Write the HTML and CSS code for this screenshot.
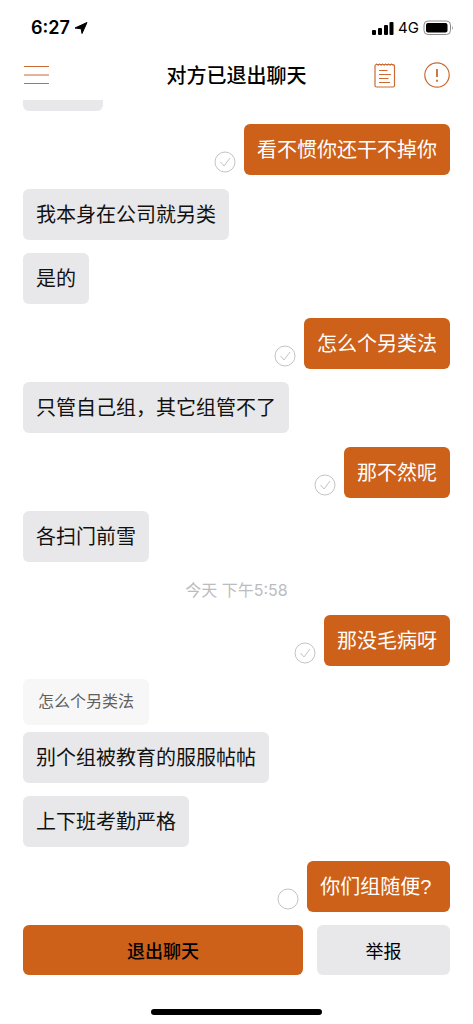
FILE: index.html
```html
<!DOCTYPE html>
<html lang="zh-CN">
<head>
<meta charset="utf-8">
<meta name="viewport" content="width=device-width, initial-scale=1">
<title>对方已退出聊天</title>
<link rel="stylesheet" href="styles.css">
</head>
<body>
<svg class="defs" aria-hidden="true">
  <symbol id="read" viewBox="0 0 22 24">
    <circle cx="11" cy="11" r="10"/><path d="M6.500 11l3.500 4 6-8"/>
  </symbol>
  <symbol id="sent" viewBox="0 0 22 24"><circle cx="11" cy="11" r="10"/></symbol>
</svg>
<div class="app">
  <div class="status-bar">
    <div class="status-group">
      <span class="clock">6:27</span>
      <svg class="location" viewBox="0 0 14 14" aria-hidden="true"><path d="M13 1.500L8 12.500 7.200 7.800 1 7z" fill="#000" stroke="#000" stroke-linejoin="round"/></svg>
    </div>
    <div class="status-group">
      <svg class="signal" viewBox="0 0 22 14" aria-hidden="true"><rect x="0" y="9" width="4" height="5" rx="1"/><rect x="6" y="7" width="4" height="7" rx="1"/><rect x="12" y="4" width="4" height="10" rx="1"/><rect x="17.500" y="1" width="4" height="13" rx="1"/></svg>
      <span class="network">4G</span>
      <svg class="battery" viewBox="0 0 31 16" aria-hidden="true"><rect x="1" y="1" width="26.500" height="13.500" rx="4" fill="none" stroke="#8c8c8c"/><rect x="3" y="3" width="21.500" height="9.500" rx="2"/><path d="M29 5.500q1.500 2 0 4.500z" fill="#8c8c8c"/></svg>
    </div>
  </div>
  <header class="header">
    <button class="icon-button" type="button" aria-label="菜单">
      <svg class="icon" viewBox="0 0 26 26"><path d="M1 4.500h25M1 13h25M1 21.500h25"/></svg>
    </button>
    <h1 class="title">对方已退出聊天</h1>
    <div class="actions">
      <button class="icon-button" type="button" aria-label="记录">
        <svg class="icon" viewBox="0 0 26 26"><rect x="3" y="2.500" width="19.500" height="22.500" rx="1.500"/><path d="M7 8.500H15.500M7 12.500H19M7 16.500H16.500M7 20.500H18"/><path d="M4.500 1.500l2 2.500M7.500 1.500l2 2.500M10.500 1.500l2 2.500M13.500 1.500l2 2.500M16.500 1.500l2 2.500M19.500 1.500l2 2.500" stroke-width="1"/></svg>
      </button>
      <button class="icon-button" type="button" aria-label="提示">
        <svg class="icon" viewBox="0 0 26 26"><circle cx="13" cy="13" r="12.200"/><path d="M13 7v8M13 17.800v2" stroke-width="1.800"/></svg>
      </button>
    </div>
  </header>
  <main class="chat">
    <div class="earlier"></div>
    <div class="row out"><svg class="receipt"><use href="#read"/></svg><p class="bubble">看不惯你还干不掉你</p></div>
    <div class="row"><p class="bubble">我本身在公司就另类</p></div>
    <div class="row"><p class="bubble">是的</p></div>
    <div class="row out"><svg class="receipt"><use href="#read"/></svg><p class="bubble">怎么个另类法</p></div>
    <div class="row"><p class="bubble">只管自己组，其它组管不了</p></div>
    <div class="row out"><svg class="receipt"><use href="#read"/></svg><p class="bubble">那不然呢</p></div>
    <div class="row"><p class="bubble">各扫门前雪</p></div>
    <time class="time">今天 下午5:58</time>
    <div class="row out"><svg class="receipt"><use href="#read"/></svg><p class="bubble">那没毛病呀</p></div>
    <div class="row"><blockquote class="quote">怎么个另类法</blockquote></div>
    <div class="row reply"><p class="bubble">别个组被教育的服服帖帖</p></div>
    <div class="row"><p class="bubble">上下班考勤严格</p></div>
    <div class="row out"><svg class="receipt"><use href="#sent"/></svg><p class="bubble">你们组随便?&nbsp;</p></div>
  </main>
  <footer class="footer">
    <button class="button leave" type="button">退出聊天</button>
    <button class="button report" type="button">举报</button>
  </footer>
  <div class="home-indicator"></div>
</div>
</body>
</html>
```
FILE: styles.css
```css
* { box-sizing: border-box; }

body {
  margin: 0;
  background: #fff;
  color: #111;
  font-family: "Liberation Sans", "Noto Sans CJK SC", sans-serif;
}

.defs { display: none; }

.app {
  display: flex;
  flex-direction: column;
  min-height: 100vh;
  padding-bottom: 9px;
}

.status-bar {
  display: flex;
  align-items: center;
  justify-content: space-between;
  height: 56px;
  padding: 0 19px 0 31px;
  color: #000;
}

.status-group {
  display: flex;
  align-items: center;
  gap: 4px;
}

.clock {
  font: 600 18px/24px Inter, sans-serif;
}

.network {
  font: 400 15px/24px Inter, sans-serif;
}

.location { width: 14px; height: 14px; }
.signal { width: 22px; height: 14px; }
.battery { width: 31px; height: 16px; }

.header {
  display: grid;
  grid-template-columns: 1fr auto 1fr;
  align-items: center;
  height: 44px;
  padding: 0 23px 6px;
}

.icon-button {
  display: block;
  width: 26px;
  height: 26px;
  padding: 0;
  border: 0;
  background: none;
}

.icon {
  display: block;
  width: 26px;
  height: 26px;
  fill: none;
  stroke: #cc6a32;
  stroke-width: 1.2;
}

.title {
  margin: 0;
  padding-top: 2px;
  color: #000;
  font-size: 20px;
  font-weight: 500;
  line-height: 28px;
}

.actions {
  display: flex;
  justify-content: flex-end;
  gap: 26px;
}

.chat {
  display: flex;
  flex-direction: column;
  padding: 0 23px;
}

.earlier {
  width: 80px;
  height: 11px;
  border-radius: 0 0 6px 6px;
  background: #e8e8ea;
}

.row {
  display: flex;
  align-items: flex-end;
  gap: 8px;
  margin-top: 13px;
}

.out {
  justify-content: flex-end;
  margin-top: 14px;
}

.earlier + .out { margin-top: 13px; }
.earlier + .out + .row { margin-top: 14px; }

.reply { margin-top: 7px; }

.bubble {
  margin: 0;
  padding: 12px 13px 11px;
  border-radius: 6px;
  background: #e8e8ea;
  font-size: 20px;
  line-height: 28px;
}

.out .bubble {
  background: #ce6119;
  color: #fff;
}

.quote {
  margin: 0;
  padding: 11px 15px;
  border-radius: 6px;
  background: #f7f7f7;
  color: #606060;
  font-size: 16px;
  line-height: 24px;
}

.receipt {
  flex: none;
  width: 22px;
  height: 24px;
  fill: none;
  stroke: #c4c4c6;
}

.time {
  margin-top: 17px;
  color: #bcbcbe;
  font-family: Inter, "Noto Sans CJK SC", sans-serif;
  font-size: 16px;
  line-height: 22px;
  text-align: center;
}

.footer {
  display: flex;
  gap: 14px;
  padding: 13px 23px 0;
}

.button {
  height: 50px;
  padding: 0;
  border: 0;
  border-radius: 6px;
  color: #000;
  font-family: inherit;
  font-size: 18px;
}

.leave {
  flex: 280 1 0;
  background: #ce6119;
  font-weight: 500;
}

.report {
  flex: 133 1 0;
  background: #e8e8ea;
}

.home-indicator {
  align-self: center;
  width: 36%;
  height: 6px;
  margin-top: auto;
  border-radius: 3px;
  background: #000;
}
```
